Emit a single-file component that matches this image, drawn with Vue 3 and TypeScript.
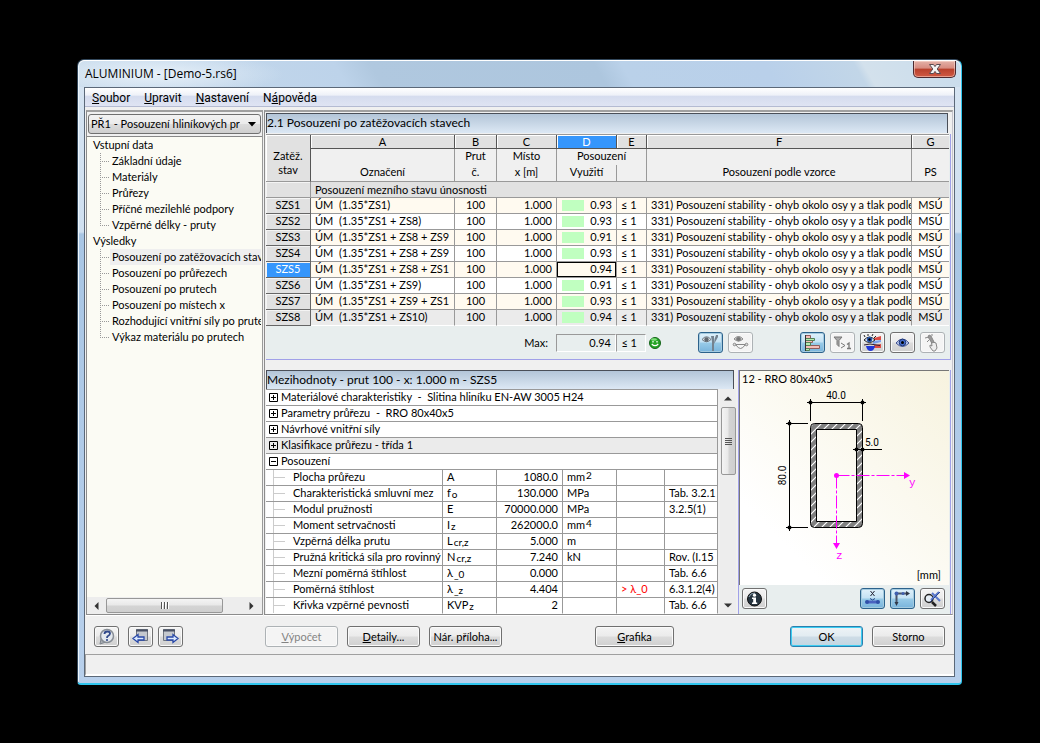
<script setup lang="ts">
import { ref } from 'vue'

interface TreeGroup { label: string; items: string[] }
interface LoadCase { id: string; name: string; ratio: string }
interface Detail {
  name: string
  symbol: string
  sub?: string
  value: string
  unit?: string
  power?: string
  note?: string
  reference?: string
}

const menu = [
  ['S', 'oubor'],
  ['U', 'pravit'],
  ['N', 'astavení'],
]

const tree: TreeGroup[] = [
  {
    label: 'Vstupní data',
    items: ['Základní údaje', 'Materiály', 'Průřezy', 'Příčné mezilehlé podpory', 'Vzpěrné délky - pruty'],
  },
  {
    label: 'Výsledky',
    items: [
      'Posouzení po zatěžovacích stavech',
      'Posouzení po průřezech',
      'Posouzení po prutech',
      'Posouzení po místech x',
      'Rozhodující vnitřní síly po prutech',
      'Výkaz materiálu po prutech',
    ],
  },
]
const activeItem = ref('Posouzení po zatěžovacích stavech')

const letters = ['A', 'B', 'C', 'D', 'E', 'F', 'G']

const cases: LoadCase[] = [
  { id: 'SZS1', name: 'ÚM  (1.35*ZS1)', ratio: '0.93' },
  { id: 'SZS2', name: 'ÚM  (1.35*ZS1 + ZS8)', ratio: '0.93' },
  { id: 'SZS3', name: 'ÚM  (1.35*ZS1 + ZS8 + ZS9', ratio: '0.91' },
  { id: 'SZS4', name: 'ÚM  (1.35*ZS1 + ZS8 + ZS9', ratio: '0.93' },
  { id: 'SZS5', name: 'ÚM  (1.35*ZS1 + ZS8 + ZS1', ratio: '0.94' },
  { id: 'SZS6', name: 'ÚM  (1.35*ZS1 + ZS9)', ratio: '0.91' },
  { id: 'SZS7', name: 'ÚM  (1.35*ZS1 + ZS9 + ZS1', ratio: '0.93' },
  { id: 'SZS8', name: 'ÚM  (1.35*ZS1 + ZS10)', ratio: '0.94' },
]
const selectedCase = ref('SZS5')

const groups = [
  'Materiálové charakteristiky  -  Slitina hliníku EN-AW 3005 H24',
  'Parametry průřezu  -  RRO 80x40x5',
  'Návrhové vnitřní síly',
  'Klasifikace průřezu - třída 1',
]

const details: Detail[] = [
  { name: 'Plocha průřezu', symbol: 'A', value: '1080.0', unit: 'mm', power: '2' },
  { name: 'Charakteristická smluvní mez', symbol: 'f', sub: 'o', value: '130.000', unit: 'MPa', reference: 'Tab. 3.2.1' },
  { name: 'Modul pružnosti', symbol: 'E', value: '70000.000', unit: 'MPa', reference: '3.2.5(1)' },
  { name: 'Moment setrvačnosti', symbol: 'I', sub: 'z', value: '262000.0', unit: 'mm', power: '4' },
  { name: 'Vzpěrná délka prutu', symbol: 'L', sub: 'cr,z', value: '5.000', unit: 'm' },
  { name: 'Pružná kritická síla pro rovinný', symbol: 'N', sub: 'cr,z', value: '7.240', unit: 'kN', reference: 'Rov. (I.15' },
  { name: 'Mezní poměrná štíhlost', symbol: 'λ', sub: '_0', value: '0.000', reference: 'Tab. 6.6' },
  { name: 'Poměrná štíhlost', symbol: 'λ', sub: '_z', value: '4.404', note: '> λ_0', reference: '6.3.1.2(4)' },
  { name: 'Křivka vzpěrné pevnosti', symbol: 'KVP', sub: 'z', value: '2', reference: 'Tab. 6.6' },
]
</script>

<template>
  <div class="desktop">
    <div class="window">
      <header class="titlebar">
        <h1>ALUMINIUM - [Demo-5.rs6]</h1>
        <button class="close" type="button" aria-label="Zavřít">
          <svg width="14" height="12" viewBox="0 0 14 12">
            <path d="M1.500 1.500h4L7 3.600 8.500 1.500h4L9.200 6l3.300 4.500h-4L7 8.400 5.500 10.500h-4L4.800 6z" fill="#f4f4f4" stroke="#5b4a50" />
          </svg>
        </button>
      </header>

      <main class="client">
        <nav class="menu">
          <button v-for="m in menu" :key="m[0]" type="button"><u>{{ m[0] }}</u>{{ m[1] }}</button>
          <button type="button">N<u>á</u>pověda</button>
        </nav>

        <div class="workspace">
          <aside class="navigator">
            <div class="combo">
              <select aria-label="Případ posouzení">
                <option>PŘ1 - Posouzení hliníkových pr</option>
              </select>
              <svg width="8" height="5" viewBox="0 0 8 5"><path d="M0 0h8L4 4.500z" fill="#000" /></svg>
            </div>
            <div class="tree">
              <div v-for="g in tree" :key="g.label">
                <div class="tree-head">{{ g.label }}</div>
                <ul>
                  <li v-for="item in g.items" :key="item">
                    <a href="#" :class="{ active: item === activeItem }" @click.prevent="activeItem = item">{{ item }}</a>
                  </li>
                </ul>
              </div>
            </div>
            <div class="hscroll">
              <svg width="5" height="8" viewBox="0 0 5 8"><path d="M4.500 0v8L0.500 4z" fill="#333" /></svg>
              <div class="thumb"><i></i><i></i><i></i></div>
              <svg width="5" height="8" viewBox="0 0 5 8"><path d="M0.500 0v8L4.500 4z" fill="#333" /></svg>
            </div>
          </aside>

          <section class="results">
            <h2 class="caption">2.1 Posouzení po zatěžovacích stavech</h2>
            <div class="upper">
              <table class="grid">
                <colgroup>
                  <col class="w-id" /><col class="w-a" /><col class="w-b" /><col class="w-c" />
                  <col class="w-d" /><col class="w-e" /><col /><col class="w-g" />
                </colgroup>
                <thead>
                  <tr class="letters">
                    <th class="corner" rowspan="3">Zatěž.<br />stav</th>
                    <th v-for="l in letters" :key="l" :class="{ current: l === 'D' }">{{ l }}</th>
                  </tr>
                  <tr class="head-top">
                    <th></th><th>Prut</th><th>Místo</th><th colspan="2">Posouzení</th><th></th><th></th>
                  </tr>
                  <tr class="head-bottom">
                    <th>Označení</th><th>č.</th><th>x [m]</th><th class="split">Využití</th><th></th><th>Posouzení podle vzorce</th><th>PS</th>
                  </tr>
                </thead>
                <tbody>
                  <tr class="group">
                    <th></th>
                    <td colspan="7">Posouzení mezního stavu únosnosti</td>
                  </tr>
                  <tr v-for="c in cases" :key="c.id" :class="{ selected: c.id === selectedCase }" @click="selectedCase = c.id">
                    <th>{{ c.id }}</th>
                    <td>{{ c.name }}</td>
                    <td class="center">100</td>
                    <td class="num">1.000</td>
                    <td class="num ratio">{{ c.ratio }}</td>
                    <td>≤ 1</td>
                    <td class="formula">331) Posouzení stability - ohyb okolo osy y a tlak podle</td>
                    <td class="center">MSÚ</td>
                  </tr>
                </tbody>
              </table>
              <div class="summary">
                <span class="max-label">Max:</span>
                <output class="max-value">0.94</output>
                <output class="max-limit">≤ 1</output>
                <svg class="smile" width="12" height="12" viewBox="0 0 12 12">
                  <circle cx="6" cy="6" r="5.500" fill="#25a425" stroke="#14641a" />
                  <ellipse cx="5" cy="2.500" rx="3" ry="1.200" fill="#7fe07a" />
                  <path d="M4 4v1.500M8 4v1.500" stroke="#fff" stroke-width="1.300" />
                  <path d="M2.800 7q3.200 3.400 6.400 0" fill="none" stroke="#fff" stroke-width="1.200" />
                </svg>
                <div class="tools first">
                  <button class="tool on" type="button" aria-label="Filtr průřezů">
                    <svg width="21" height="18" viewBox="0 0 21 18">
                      <path d="M2 5.500q4.500-5.500 9 0-4.500 4.500-9 0z" fill="#dde3e8" stroke="#707880" /><circle cx="6.500" cy="5.500" r="2.200" fill="#606870" />
                      <path d="M11 2h3v15h-2V8zM18 1h-2q-2 4-2 9l4-7z" fill="#74828f" />
                    </svg>
                  </button>
                  <button class="tool off" type="button" aria-label="Průběhy">
                    <svg width="21" height="18" viewBox="0 0 21 18" fill="none" stroke="#888">
                      <path d="M4 5q4.500-5 9 0-4.500 4-9 0z" fill="#ddd" /><circle cx="8.500" cy="5" r="2" fill="#777" />
                      <path d="M4 10.500h13M6 11q4.500 7 9 0" /><circle cx="4.500" cy="10.500" r="1.300" fill="#ddd" /><circle cx="16.500" cy="10.500" r="1.300" fill="#ddd" />
                    </svg>
                  </button>
                </div>
                <div class="tools last">
                  <button class="tool on" type="button" aria-label="Barevné pruhy">
                    <svg width="21" height="18" viewBox="0 0 21 18">
                      <path d="M3.500 1.500h5v3h-5zM3.500 6.500h7v2h-7zM3.500 11.500h14v3h-14z" fill="#f4bdb8" stroke="#905c5c" /><path d="M3.500 4.500h9v2h-9zM3.500 8.500h5v3h-5zM3.500 14.500h4v2h-4z" fill="#b3ecb2" stroke="#558055" /><path d="M3.500 1v16" stroke="#333" />
                    </svg>
                  </button>
                  <button class="tool off" type="button" aria-label="Pouze větší než 1">
                    <svg width="21" height="18" viewBox="0 0 21 18" fill="none" stroke="#777">
                      <path d="M2 3h8L7 6.500v6l-2-2v-4z" fill="#aaa" /><path d="M9 9l4 2.500L9 14" /><path d="M15 10.500l2-1.500v6M15 14.500h4" stroke-width="1.300" />
                    </svg>
                  </button>
                  <button class="tool" type="button" aria-label="Barevná škála">
                    <svg width="21" height="18" viewBox="0 0 21 18">
                      <path d="M12 4l7-2v4h-7zM12 11l7-1v4h-7z" fill="#dc4d45" /><path d="M11 7l8-1v2l-8 2z" fill="#7aa0e8" /><path d="M4 12h9q-1 5-4.500 5T4 12z" fill="#2038d8" /><path d="M2 11l6-1 10 1.500" stroke="#302030" fill="none" />
                      <path d="M2 6q5.500-6 11 0-5.500 5-11 0z" fill="#dfe8f6" stroke="#222" /><circle cx="7.500" cy="5.500" r="2.700" fill="#2858b0" /><circle cx="7.500" cy="5.500" r="1.200" fill="#000" /><path d="M3 3L2 1M6 2V0M10 2l1-2M12 4l2-2" stroke="#222" />
                    </svg>
                  </button>
                  <button class="tool" type="button" aria-label="Náhled">
                    <svg width="21" height="18" viewBox="0 0 21 18">
                      <path d="M4 9q6.500-8 13 0-6.500 7-13 0z" fill="#bfcdf0" stroke="#405090" /><circle cx="10.500" cy="8.500" r="3.300" fill="#4870d0" stroke="#203878" /><circle cx="10.500" cy="8.500" r="1.500" fill="#000" />
                    </svg>
                  </button>
                  <button class="tool off" type="button" aria-label="Vybrat">
                    <svg width="21" height="18" viewBox="0 0 21 18" fill="#eee" stroke="#888">
                      <path d="M9 6l2 2 3 1 1 5-2 3h-2l-3-4v-2l2 1z" /><path d="M7 1l2 1 3 6-2 1-4-6z" fill="#999" /><path d="M3 4l4-1M7 6l-2 2M10 2V0" />
                    </svg>
                  </button>
                </div>
              </div>
            </div>

            <div class="lower">
              <div class="intermediate">
                <h2 class="caption">Mezihodnoty - prut 100 - x: 1.000 m - SZS5</h2>
                <div class="inter-body">
                  <table class="values">
                    <colgroup>
                      <col class="v-name" /><col class="v-sym" /><col class="v-val" /><col class="v-unit" /><col class="v-note" /><col />
                    </colgroup>
                    <tbody>
                      <tr v-for="(g, i) in groups" :key="g" :class="{ shade: i === 3 }">
                        <td colspan="6" class="node">
                          <div><button type="button" class="expander" aria-label="Rozbalit"><svg width="9" height="9" viewBox="0 0 9 9"><path d="M.5.5h8v8h-8zM2 4.500h5M4.500 2v5" fill="none" stroke="#000" /></svg></button>{{ g }}</div>
                        </td>
                      </tr>
                      <tr>
                        <td colspan="6" class="node">
                          <div><button type="button" class="expander" aria-label="Sbalit"><svg width="9" height="9" viewBox="0 0 9 9"><path d="M.5.5h8v8h-8zM2 4.500h5" fill="none" stroke="#000" /></svg></button>Posouzení</div>
                        </td>
                      </tr>
                      <tr v-for="d in details" :key="d.name">
                        <td class="leaf">{{ d.name }}</td>
                        <td>{{ d.symbol }}<sub v-if="d.sub">{{ d.sub }}</sub></td>
                        <td class="num">{{ d.value }}</td>
                        <td>{{ d.unit }}<sup v-if="d.power">{{ d.power }}</sup></td>
                        <td class="note">{{ d.note }}</td>
                        <td class="refer">{{ d.reference }}</td>
                      </tr>
                    </tbody>
                  </table>
                  <div class="vscroll">
                    <svg width="8" height="5" viewBox="0 0 8 5"><path d="M0 4.500h8L4 .5z" fill="#333" /></svg>
                    <div class="thumb"><i></i><i></i><i></i><i></i></div>
                    <svg width="8" height="5" viewBox="0 0 8 5"><path d="M0 .5h8L4 4.500z" fill="#333" /></svg>
                  </div>
                </div>
              </div>

              <div class="section-view">
                <div class="canvas">
                  <div class="section-name">12 - RRO 80x40x5</div>
                  <svg class="drawing" width="190" height="174" viewBox="0 18 190 174">
                    <defs>
                      <pattern id="hatch" width="8" height="8" patternUnits="userSpaceOnUse">
                        <rect width="8" height="8" fill="#808080" />
                        <path d="M-1 9L9-1M-1 1L1-1M7 9L9 7" stroke="#fff" stroke-width="1.200" />
                      </pattern>
                    </defs>
                    <path d="M76.500 52.500h44q4 0 4 4v96q0 4-4 4h-44q-4 0-4-4v-96q0-4 4-4zM78.500 58.500v92h40v-92z" fill="url(#hatch)" fill-rule="evenodd" stroke="#000" />
                    <g stroke="#000" fill="none">
                      <path d="M69 31.500h59M72.500 28v22M124.500 28v22" />
                      <path d="M51.500 49v111M48 52.500h22M48 156.500h22" />
                      <path d="M115 78.500h29" />
                    </g>
                    <g fill="#000">
                      <circle cx="72.500" cy="31.500" r="2" /><circle cx="124.500" cy="31.500" r="2" />
                      <circle cx="51.500" cy="52.500" r="2" /><circle cx="51.500" cy="156.500" r="2" />
                      <circle cx="118.500" cy="78.500" r="2" /><circle cx="124.500" cy="78.500" r="2" />
                    </g>
                    <g class="dims">
                      <text x="98" y="28" text-anchor="middle">40.0</text>
                      <text x="127" y="75">5.0</text>
                      <text transform="translate(48 104.500) rotate(-90)" text-anchor="middle">80.0</text>
                    </g>
                    <g fill="none" stroke="#ff00ff">
                      <path d="M98.500 104.500h68M98.500 104.500v68" stroke-dasharray="13 2 3 2" />
                    </g>
                    <g fill="#ff00ff">
                      <circle cx="98.500" cy="104.500" r="2.500" />
                      <path d="M166 101l6 3.500-6 3.500zM95 172h7l-3.500 6z" />
                    </g>
                    <g class="axes"><text x="171" y="115">y</text><text x="98" y="188">z</text></g>
                  </svg>
                  <div class="unit">[mm]</div>
                </div>
                <div class="section-tools">
                  <button class="tool" type="button" aria-label="Informace">
                    <svg width="21" height="18" viewBox="0 0 21 18">
                      <circle cx="10.500" cy="9" r="7" fill="#26343f" stroke="#111" /><path d="M5 7q1-4 6-4" stroke="#8fa5b5" fill="none" />
                      <circle cx="10.500" cy="5.200" r="1.600" fill="#fff" /><path d="M8 7.500h4v5h1.200V14H8v-1.500h1.200V9H8z" fill="#fff" />
                    </svg>
                  </button>
                  <button class="tool on push" type="button" aria-label="Kóty">
                    <svg width="21" height="18" viewBox="0 0 21 18">
                      <path d="M8.500 1l4 5M12.500 1l-4 5" stroke="#223" fill="none" /><path d="M5 12h11" stroke="#4a62c0" stroke-width="3" /><circle cx="5" cy="12" r="2" fill="#3050a8" /><circle cx="16" cy="12" r="2" fill="#3050a8" /><path d="M8 8.500l2.500 1.500L13 8.500" stroke="#248" fill="none" />
                    </svg>
                  </button>
                  <button class="tool on" type="button" aria-label="Osy">
                    <svg width="21" height="18" viewBox="0 0 21 18">
                      <path d="M4 3.500h11M4.500 3v10" stroke="#4a5468" stroke-width="2" /><path d="M14 1l4 2.500-4 2.500zM2.500 12h4l-2 4z" fill="#303848" /><circle cx="4.500" cy="3.500" r="2" fill="#4060b0" /><circle cx="11" cy="3.500" r="1.500" fill="#4060b0" />
                    </svg>
                  </button>
                  <button class="tool" type="button" aria-label="Přiblížit">
                    <svg width="21" height="18" viewBox="0 0 21 18">
                      <circle cx="7" cy="8.500" r="4" fill="#e6eef6" stroke="#222" stroke-width="1.500" /><path d="M10 12l4 4" stroke="#222" stroke-width="2.500" /><path d="M9 10L17 2M10 3l8 8" stroke="#5a78cc" stroke-width="2" /><path d="M8 12L18 2" stroke="#304890" />
                    </svg>
                  </button>
                </div>
              </div>
            </div>
          </section>
        </div>

        <footer class="actions">
          <button class="tool" type="button" aria-label="Nápověda">
            <svg width="21" height="18" viewBox="0 0 21 18">
              <path d="M5 11l-1 5 6-2z" fill="#a8adb4" stroke="#80868e" /><circle cx="11" cy="8" r="6.500" fill="#e3e8ee" stroke="#888e96" stroke-width="1.500" />
              <path d="M8.500 6q0-2.500 2.800-2.500 2.700 0 2.700 2 0 1.500-2 2.500-1 .5-1 2" fill="none" stroke="#30488a" stroke-width="1.800" /><circle cx="11" cy="12" r="1.100" fill="#30488a" />
            </svg>
          </button>
          <button class="tool prev" type="button" aria-label="Předchozí">
            <svg width="21" height="18" viewBox="0 0 21 18">
              <path d="M6.500 1.500h11v11h-11z" fill="#c4c8ce" stroke="#707680" /><path d="M6 2.500h12" stroke="#485064" stroke-width="2" /><path d="M3 10.500L8 6.500v2.500h6v3H8v2.500z" fill="#dceaff" stroke="#2848a8" stroke-width="1.300" />
            </svg>
          </button>
          <button class="tool" type="button" aria-label="Další">
            <svg width="21" height="18" viewBox="0 0 21 18">
              <path d="M3.500 1.500h11v11h-11z" fill="#c4c8ce" stroke="#707680" /><path d="M3 2.500h12" stroke="#485064" stroke-width="2" /><path d="M18 10.500L13 6.500v2.500H7v3h6v2.500z" fill="#dceaff" stroke="#2848a8" stroke-width="1.300" />
            </svg>
          </button>
          <button class="push-button calc" type="button" disabled><u>V</u>ýpočet</button>
          <button class="push-button" type="button"><u>D</u>etaily...</button>
          <button class="push-button" type="button">Nár. příloha...</button>
          <button class="push-button graphics" type="button"><u>G</u>rafika</button>
          <button class="push-button ok" type="button">OK</button>
          <button class="push-button" type="button">Storno</button>
        </footer>
        <div class="status"></div>
      </main>
    </div>
  </div>
</template>

<style>
html,
body {
  background: #000;
}
</style>

<style scoped>
* {
  box-sizing: border-box;
}
.desktop {
  min-height: 100vh;
  padding: 59px 78px 59px 77px;
  font: 11px/16px Lato, "Liberation Sans", Arial, sans-serif;
  color: #000;
}
button,
select {
  font: inherit;
  color: inherit;
  margin: 0;
  padding: 0;
}
svg {
  display: block;
  flex: none;
}
.window {
  border: 1px solid #33485c;
  border-right-color: #2fc6ee;
  border-bottom: 2px solid #2fc6ee;
  border-radius: 7px 7px 4px 4px;
  padding: 0 6px 6px;
  background: linear-gradient(#d6e4f2 0, #d0e0f0 172px, #a9c6e4 174px, #b8d0ec 100%);
  box-shadow: inset 1px 1px 0 #eef6fc;
}
.titlebar {
  display: flex;
  justify-content: space-between;
  align-items: flex-start;
  height: 27px;
  margin: 0 -5px;
  padding: 0 4px 0 6px;
  border-top: 1px solid #fff;
  border-radius: 6px 6px 0 0;
  background:
    radial-gradient(ellipse 130px 22px at 75px 13px, rgba(235, 243, 250, 0.9), rgba(235, 243, 250, 0) 100%),
    linear-gradient(60deg, #c8dbec 0, #bdd3ea 30%, #b0c8df 34%, #adc6de 59%, #bad1e9 62%, #b9d0ea 78%, #c2d6e8 88%, #d3e1ec 89%, #c9dcec 100%);
}
h1,
h2 {
  margin: 0;
  font: 12px/18px Lato, "Liberation Sans", sans-serif;
}
h1 {
  padding-top: 4px;
  font-family: "Open Sans", "Noto Sans", sans-serif;
}
.close {
  display: flex;
  align-items: center;
  justify-content: center;
  width: 43px;
  height: 17px;
  border: 1px solid #4c2a30;
  border-top: 0;
  border-radius: 0 0 5px 5px;
  background: linear-gradient(#e3b1a8 0, #d78b80 45%, #b8402c 50%, #d05a44 100%);
  box-shadow: inset 0 0 0 1px rgba(255, 225, 215, 0.5);
}
.client {
  border: 1px solid #5b6878;
  background: #f0f0f0;
}
.menu {
  display: flex;
  align-items: flex-start;
  gap: 14px;
  height: 19px;
  padding-top: 2px;
  padding-left: 7px;
  border-bottom: 1px solid #b4bbd2;
  background: linear-gradient(#fff 0, #eef1f8 40%, #d5dcee 45%, #dfe4f3 100%);
}
.menu button {
  border: 0;
  background: none;
  font: 12px/16px Roboto, "Liberation Sans", sans-serif;
}
.workspace {
  display: flex;
  gap: 1px;
  padding: 3px 1px 0 1px;
}
.navigator {
  display: flex;
  flex-direction: column;
  flex: none;
  width: 177px;
  border: 1px solid #8c8c8c;
  border-top: 2px solid #a0a0a0;
  border-right-color: #9a9a9a;
  box-shadow: 0 1px 0 #fff;
}
.combo {
  position: relative;
  margin: 2px 1px;
}
.combo select {
  display: block;
  width: 100%;
  height: 20px;
  padding: 0 20px 0 2px;
  border: 1px solid #707070;
  border-radius: 3px;
  appearance: none;
  background: linear-gradient(#f3f3f3 0, #ebebeb 48%, #dcdcdc 52%, #cfcfcf 100%);
}
.combo svg {
  position: absolute;
  right: 5px;
  top: 8px;
  pointer-events: none;
}
.tree {
  flex: 1;
  padding: 0 0 0 6px;
  border-top: 1px solid #888;
  background: #fbfbf4;
  overflow: hidden;
  white-space: nowrap;
}
.tree ul {
  margin: 0 1px 0 0;
  padding: 0 0 0 7px;
  list-style: none;
  overflow: hidden;
}
.tree li {
  padding-left: 10px;
  background:
    repeating-linear-gradient(#999 0 1px, transparent 1px 2px) 0 0 / 1px 100% no-repeat,
    repeating-linear-gradient(90deg, #999 0 1px, transparent 1px 2px) 0 8px / 10px 1px no-repeat;
}
.tree li:last-child {
  background-size: 1px 9px, 10px 1px;
}
.tree a {
  display: block;
  padding-left: 2px;
  color: inherit;
  text-decoration: none;
  overflow: hidden;
}
.tree a.active {
  background: #efefef;
}
.hscroll {
  display: flex;
  align-items: center;
  height: 17px;
  padding: 0 8px 0 7px;
  background: #ededed;
}
.thumb {
  display: flex;
  align-items: center;
  justify-content: center;
  gap: 1px;
  border: 1px solid #979797;
  border-radius: 2px;
}
.hscroll .thumb {
  width: 117px;
  height: 15px;
  margin-left: 7px;
  margin-right: auto;
  background: linear-gradient(#f4f4f4 0, #e8e8e8 48%, #d4d4d4 52%, #cfcfcf 100%);
}
.hscroll i {
  width: 2px;
  height: 7px;
  border-left: 1px solid #555;
  background: #fff;
}
.results {
  flex: 1;
  min-width: 0;
  padding: 1px 1px 0 1px;
  border-left: 1px solid #8c8c8c;
  border-top: 2px solid #a0a0a0;
  border-bottom: 1px solid #8c8c8c;
  border-right: 1px solid #c4c4cc;
  box-shadow: 0 1px 0 #fff;
}
.caption {
  height: 20px;
  border: 1px solid #4a4f58;
  border-bottom: 0;
  background: linear-gradient(#b3c5d8, #dce8f4);
  white-space: nowrap;
  overflow: hidden;
}
.results > .caption {
  margin-right: 3px;
}
.upper {
  margin-top: 1px;
  padding-right: 1px;
  border-right: 1px solid #a0a0e8;
  border-bottom: 1px solid #a0a0e8;
  background: #e8eeee;
}
table {
  width: 100%;
  table-layout: fixed;
  border-collapse: separate;
  border-spacing: 0;
}
.grid {
  border-top: 1px solid #999;
}
th,
td {
  height: 16px;
  padding: 0 4px 1px;
  border-right: 1px solid #999;
  border-bottom: 1px solid #999;
  font-weight: 400;
  line-height: 14px;
  white-space: pre;
  overflow: hidden;
  text-align: left;
}
.w-id { width: 45px; }
.w-a { width: 144px; }
.w-b { width: 42px; }
.w-c { width: 60px; }
.w-d { width: 60px; }
.w-e { width: 30px; }
.w-g { width: 37px; }
.grid thead th {
  padding: 0;
  background: #f0f0f0;
  text-align: center;
}
.grid .letters th {
  height: 14px;
  line-height: 13px;
  background: #e1e1e1;
  border-right: 1px solid #555;
  border-bottom: 1px solid #555;
  box-shadow: inset 1px 1px 0 #fff;
}
.grid .letters th.current {
  background: #3596fc;
  color: #fff;
}
.grid .letters th.corner {
  padding-top: 10px;
  line-height: 14px;
  border-bottom-color: #999;
}
.grid .head-top th {
  height: 16px;
  line-height: 14px;
  padding-bottom: 2px;
  border-bottom: 0;
}
.grid .head-bottom th {
  height: 17px;
  line-height: 14px;
  padding-bottom: 2px;
}
.grid tbody th {
  padding: 0 0 2px;
  background: #e1e1e1;
  border-color: #666;
  text-align: center;
  line-height: 13px;
  box-shadow: inset 1px 1px 0 #f4f4f4;
}
.grid tbody td {
  background-color: #fff;
}
.grid tbody tr:nth-child(even) td {
  background-color: #fffaf0;
}
.grid tbody tr.group td,
.grid tbody tr.group th {
  background: #e1e1e1;
  border-color: #999;
}
.grid tbody tr.group td {
  padding-bottom: 0;
  line-height: 15px;
}
.grid tbody tr:last-child td {
  background-color: #ebebeb;
  border-bottom-color: #fff;
}
.grid tr.selected th {
  background: #3596fc;
  color: #fff;
}
.grid tr > :last-child {
  border-right: 0;
}
.grid .center {
  padding-left: 0;
  padding-right: 0;
  text-align: center;
}
.grid .formula {
  padding-right: 0;
}
.num {
  text-align: right;
}
.grid tbody td.ratio {
  background-image: linear-gradient(#c0ffc0, #c0ffc0);
  background-size: 22px 11px;
  background-position: 5px 2px;
  background-repeat: no-repeat;
}
.grid tbody tr.selected td.ratio {
  background-image: none;
  box-shadow: inset 0 0 0 1px #000;
}
.summary {
  display: flex;
  align-items: center;
  height: 33px;
  padding-right: 4px;
}
.max-label {
  width: 290px;
  padding-right: 8px;
  text-align: right;
}
.max-value,
.max-limit {
  height: 18px;
  padding-right: 4px;
  border: 1px solid #999;
  border-right-color: #fff;
  border-bottom-color: #fff;
  text-align: right;
}
.max-value {
  width: 60px;
}
.max-limit {
  width: 30px;
  padding-right: 8px;
}
.smile {
  margin-left: 3px;
}
.tools {
  display: flex;
  gap: 5px;
}
.tools.first {
  margin-left: 37px;
}
.tools.last {
  margin-left: auto;
}
.tool {
  display: flex;
  flex: none;
  align-items: center;
  justify-content: center;
  width: 25px;
  height: 21px;
  border: 1px solid #707070;
  border-radius: 3px;
  background: linear-gradient(#f4f4f4 0, #ebebeb 48%, #dcdcdc 52%, #d0d0d0 100%);
  box-shadow: inset 0 0 0 1px #fafafa;
}
.tool.on {
  border-color: #2c628b;
  background: linear-gradient(#e0f1fb 0, #c4e2f4 48%, #98cbe8 52%, #78b4dc 100%);
  box-shadow: inset 0 0 0 1px #a4cbe0;
}
.tool.off {
  border-color: #adb2b5;
  background: #f4f4f4;
}
.lower {
  display: flex;
  gap: 2px;
  padding-top: 10px;
}
.intermediate {
  flex: 1;
  min-width: 0;
}
.intermediate .caption {
  height: 19px;
  line-height: 18px;
  margin-right: 2px;
}
.inter-body {
  display: flex;
  gap: 2px;
}
.values {
  flex: 1;
  min-width: 0;
  border-top: 1px solid #999;
  background: #fff;
}
.v-name { width: 177px; }
.v-sym { width: 54px; }
.v-val { width: 66px; }
.v-unit { width: 54px; }
.v-note { width: 48px; }
.values tr:last-child td {
  border-bottom-color: #fff;
}
.values tr.shade td {
  background: #ebebeb;
}
.values .node {
  padding-left: 3px;
}
.node div {
  display: flex;
  align-items: center;
  gap: 3px;
}
.expander {
  border: 0;
  background: none;
}
.values .leaf {
  padding-left: 27px;
  padding-right: 0;
  background:
    linear-gradient(#ccc, #ccc) 7px 0 / 1px 100% no-repeat,
    linear-gradient(#ccc, #ccc) 8px 7px / 11px 1px no-repeat;
}
.values .refer {
  padding-right: 0;
}
sub,
sup {
  font-size: 10px;
  line-height: 0;
  margin-left: 1px;
}
sub {
  vertical-align: -1px;
}
sup {
  vertical-align: 2px;
}
.note {
  color: #f00;
}
.vscroll {
  display: flex;
  flex-direction: column;
  align-items: center;
  width: 16px;
  padding: 7px 0 6px;
  background: #ededed;
}
.vscroll .thumb {
  flex-direction: column;
  width: 15px;
  height: 68px;
  margin-top: 6px;
  margin-bottom: auto;
  background: linear-gradient(90deg, #f4f4f4 0, #e8e8e8 48%, #d4d4d4 52%, #cfcfcf 100%);
}
.vscroll i {
  width: 7px;
  height: 1px;
  background: #555;
}
.section-view {
  display: flex;
  flex-direction: column;
  flex: none;
  width: 213px;
  border-left: 1px solid #a0a0e8;
  border-right: 1px solid #a0a0e8;
  background: #e8eeee;
}
.canvas {
  display: flex;
  flex-direction: column;
  flex: 1;
  margin-right: 1px;
  border-top: 1px solid #777;
  border-left: 1px solid #777;
  background: linear-gradient(45deg, #fff 20%, #f7f3df 100%);
}
.section-name {
  padding-left: 2px;
}
.drawing {
  margin-top: 2px;
  margin-left: -2px;
}
.unit {
  margin-top: auto;
  padding: 0 8px 2px 0;
  text-align: right;
}
.dims {
  font: 10px Roboto, "Liberation Sans", sans-serif;
}
.axes {
  font: 11px "Liberation Mono", monospace;
  fill: #ff00ff;
}
.section-tools {
  display: flex;
  gap: 5px;
  padding: 3px 5px 5px 3px;
}
.push {
  margin-left: auto;
}
.actions {
  display: flex;
  align-items: center;
  gap: 9px;
  height: 39px;
  padding: 4px 9px 0;
}
.actions .prev {
  margin-right: -4px;
}
.push-button {
  width: 73px;
  height: 21px;
  border: 1px solid #707070;
  border-radius: 3px;
  background: linear-gradient(#f4f4f4 0, #ebebeb 48%, #dcdcdc 52%, #d0d0d0 100%);
  box-shadow: inset 0 0 0 1px #fafafa;
  white-space: nowrap;
}
.push-button:disabled {
  border-color: #adb2b5;
  background: #f4f4f4;
  color: #838383;
}
.push-button.calc {
  margin-left: 73px;
}
.push-button.graphics {
  width: 79px;
  margin-left: 84px;
}
.push-button.ok {
  margin-left: auto;
  border-color: #2c7fae;
  background: linear-gradient(#eef3f6 0, #e2ecf2 48%, #cedce6 52%, #c2d6e2 100%);
  box-shadow: inset 0 0 0 1px #3ccdf2;
}
.status {
  height: 22px;
  border-top: 1px solid #a0a0a0;
  border-left: 1px solid #a0a0a0;
  border-bottom: 2px solid #fff;
}
</style>
